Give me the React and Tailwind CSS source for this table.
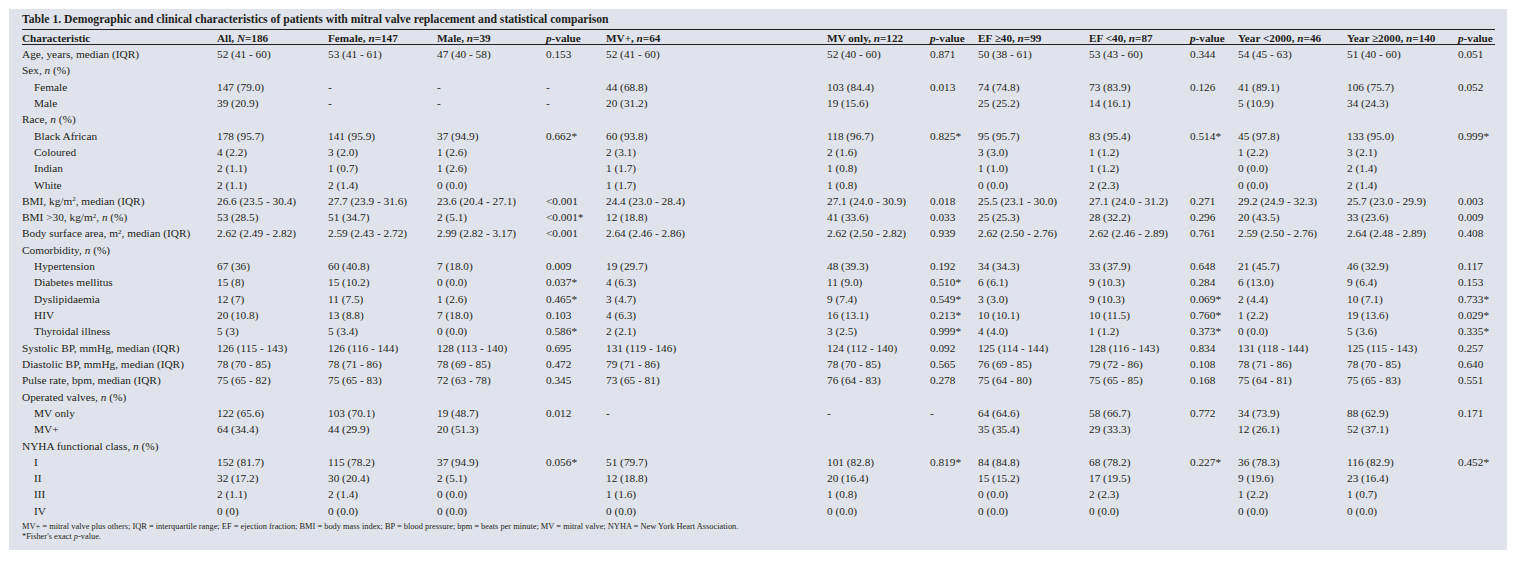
import React from "react";

const I = ({ children }) => <i>{children}</i>;

const head = [
  "Characteristic",
  <>All, <I>N</I>=186</>,
  <>Female, <I>n</I>=147</>,
  <>Male, <I>n</I>=39</>,
  <><I>p</I>-value</>,
  <>MV+, <I>n</I>=64</>,
  <>MV only, <I>n</I>=122</>,
  <><I>p</I>-value</>,
  <>EF ≥40, <I>n</I>=99</>,
  <>EF &lt;40, <I>n</I>=87</>,
  <><I>p</I>-value</>,
  <>Year &lt;2000, <I>n</I>=46</>,
  <>Year ≥2000, <I>n</I>=140</>,
  <><I>p</I>-value</>,
];

const nPct = (label) => <>{label}, <I>n</I> (%)</>;

const rows = [
  { l: "Age, years, median (IQR)", d: ["52 (41 - 60)", "53 (41 - 61)", "47 (40 - 58)", "0.153", "52 (41 - 60)", "52 (40 - 60)", "0.871", "50 (38 - 61)", "53 (43 - 60)", "0.344", "54 (45 - 63)", "51 (40 - 60)", "0.051"] },
  { l: nPct("Sex"), d: [] },
  { l: "Female", s: 1, d: ["147 (79.0)", "-", "-", "-", "44 (68.8)", "103 (84.4)", "0.013", "74 (74.8)", "73 (83.9)", "0.126", "41 (89.1)", "106 (75.7)", "0.052"] },
  { l: "Male", s: 1, d: ["39 (20.9)", "-", "-", "-", "20 (31.2)", "19 (15.6)", "", "25 (25.2)", "14 (16.1)", "", "5 (10.9)", "34 (24.3)", ""] },
  { l: nPct("Race"), d: [] },
  { l: "Black African", s: 1, d: ["178 (95.7)", "141 (95.9)", "37 (94.9)", "0.662*", "60 (93.8)", "118 (96.7)", "0.825*", "95 (95.7)", "83 (95.4)", "0.514*", "45 (97.8)", "133 (95.0)", "0.999*"] },
  { l: "Coloured", s: 1, d: ["4 (2.2)", "3 (2.0)", "1 (2.6)", "", "2 (3.1)", "2 (1.6)", "", "3 (3.0)", "1 (1.2)", "", "1 (2.2)", "3 (2.1)", ""] },
  { l: "Indian", s: 1, d: ["2 (1.1)", "1 (0.7)", "1 (2.6)", "", "1 (1.7)", "1 (0.8)", "", "1 (1.0)", "1 (1.2)", "", "0 (0.0)", "2 (1.4)", ""] },
  { l: "White", s: 1, d: ["2 (1.1)", "2 (1.4)", "0 (0.0)", "", "1 (1.7)", "1 (0.8)", "", "0 (0.0)", "2 (2.3)", "", "0 (0.0)", "2 (1.4)", ""] },
  { l: <>BMI, kg/m<sup className="text-[7px]">2</sup>, median (IQR)</>, d: ["26.6 (23.5 - 30.4)", "27.7 (23.9 - 31.6)", "23.6 (20.4 - 27.1)", "<0.001", "24.4 (23.0 - 28.4)", "27.1 (24.0 - 30.9)", "0.018", "25.5 (23.1 - 30.0)", "27.1 (24.0 - 31.2)", "0.271", "29.2 (24.9 - 32.3)", "25.7 (23.0 - 29.9)", "0.003"] },
  { l: <>BMI &gt;30, kg/m<sup className="text-[7px]">2</sup>, <I>n</I> (%)</>, d: ["53 (28.5)", "51 (34.7)", "2 (5.1)", "<0.001*", "12 (18.8)", "41 (33.6)", "0.033", "25 (25.3)", "28 (32.2)", "0.296", "20 (43.5)", "33 (23.6)", "0.009"] },
  { l: <>Body surface area, m<sup className="text-[7px]">2</sup>, median (IQR)</>, d: ["2.62 (2.49 - 2.82)", "2.59 (2.43 - 2.72)", "2.99 (2.82 - 3.17)", "<0.001", "2.64 (2.46 - 2.86)", "2.62 (2.50 - 2.82)", "0.939", "2.62 (2.50 - 2.76)", "2.62 (2.46 - 2.89)", "0.761", "2.59 (2.50 - 2.76)", "2.64 (2.48 - 2.89)", "0.408"] },
  { l: nPct("Comorbidity"), d: [] },
  { l: "Hypertension", s: 1, d: ["67 (36)", "60 (40.8)", "7 (18.0)", "0.009", "19 (29.7)", "48 (39.3)", "0.192", "34 (34.3)", "33 (37.9)", "0.648", "21 (45.7)", "46 (32.9)", "0.117"] },
  { l: "Diabetes mellitus", s: 1, d: ["15 (8)", "15 (10.2)", "0 (0.0)", "0.037*", "4 (6.3)", "11 (9.0)", "0.510*", "6 (6.1)", "9 (10.3)", "0.284", "6 (13.0)", "9 (6.4)", "0.153"] },
  { l: "Dyslipidaemia", s: 1, d: ["12 (7)", "11 (7.5)", "1 (2.6)", "0.465*", "3 (4.7)", "9 (7.4)", "0.549*", "3 (3.0)", "9 (10.3)", "0.069*", "2 (4.4)", "10 (7.1)", "0.733*"] },
  { l: "HIV", s: 1, d: ["20 (10.8)", "13 (8.8)", "7 (18.0)", "0.103", "4 (6.3)", "16 (13.1)", "0.213*", "10 (10.1)", "10 (11.5)", "0.760*", "1 (2.2)", "19 (13.6)", "0.029*"] },
  { l: "Thyroidal illness", s: 1, d: ["5 (3)", "5 (3.4)", "0 (0.0)", "0.586*", "2 (2.1)", "3 (2.5)", "0.999*", "4 (4.0)", "1 (1.2)", "0.373*", "0 (0.0)", "5 (3.6)", "0.335*"] },
  { l: "Systolic BP, mmHg, median (IQR)", d: ["126 (115 - 143)", "126 (116 - 144)", "128 (113 - 140)", "0.695", "131 (119 - 146)", "124 (112 - 140)", "0.092", "125 (114 - 144)", "128 (116 - 143)", "0.834", "131 (118 - 144)", "125 (115 - 143)", "0.257"] },
  { l: "Diastolic BP, mmHg, median (IQR)", d: ["78 (70 - 85)", "78 (71 - 86)", "78 (69 - 85)", "0.472", "79 (71 - 86)", "78 (70 - 85)", "0.565", "76 (69 - 85)", "79 (72 - 86)", "0.108", "78 (71 - 86)", "78 (70 - 85)", "0.640"] },
  { l: "Pulse rate, bpm, median (IQR)", d: ["75 (65 - 82)", "75 (65 - 83)", "72 (63 - 78)", "0.345", "73 (65 - 81)", "76 (64 - 83)", "0.278", "75 (64 - 80)", "75 (65 - 85)", "0.168", "75 (64 - 81)", "75 (65 - 83)", "0.551"] },
  { l: nPct("Operated valves"), d: [] },
  { l: "MV only", s: 1, d: ["122 (65.6)", "103 (70.1)", "19 (48.7)", "0.012", "-", "-", "-", "64 (64.6)", "58 (66.7)", "0.772", "34 (73.9)", "88 (62.9)", "0.171"] },
  { l: "MV+", s: 1, d: ["64 (34.4)", "44 (29.9)", "20 (51.3)", "", "", "", "", "35 (35.4)", "29 (33.3)", "", "12 (26.1)", "52 (37.1)", ""] },
  { l: nPct("NYHA functional class"), d: [] },
  { l: "I", s: 1, d: ["152 (81.7)", "115 (78.2)", "37 (94.9)", "0.056*", "51 (79.7)", "101 (82.8)", "0.819*", "84 (84.8)", "68 (78.2)", "0.227*", "36 (78.3)", "116 (82.9)", "0.452*"] },
  { l: "II", s: 1, d: ["32 (17.2)", "30 (20.4)", "2 (5.1)", "", "12 (18.8)", "20 (16.4)", "", "15 (15.2)", "17 (19.5)", "", "9 (19.6)", "23 (16.4)", ""] },
  { l: "III", s: 1, d: ["2 (1.1)", "2 (1.4)", "0 (0.0)", "", "1 (1.6)", "1 (0.8)", "", "0 (0.0)", "2 (2.3)", "", "1 (2.2)", "1 (0.7)", ""] },
  { l: "IV", s: 1, d: ["0 (0)", "0 (0.0)", "0 (0.0)", "", "0 (0.0)", "0 (0.0)", "", "0 (0.0)", "0 (0.0)", "", "0 (0.0)", "0 (0.0)", ""] },
];

const grid =
  "grid grid-cols-[195px_111px_109px_109px_60px_221px_103px_48px_111px_101px_48px_109px_111px_35px]";

export default function App() {
  return (
    <div
      className="w-[1513px] h-[561px] bg-white pt-[9px] pl-[9px]"
      style={{ fontFamily: '"Liberation Serif", "Times New Roman", serif' }}
    >
      <div className="w-[1498px] h-[541px] bg-[#e1e3ec] pl-[13px] pt-[4px] text-[#231f20]">
        <div className="w-[1473px]">
          <div className="text-[11.7px] leading-[14px] font-bold whitespace-nowrap">
            Table 1. Demographic and clinical characteristics of patients with mitral valve replacement and statistical comparison
          </div>
          <div className="mt-[2px] border-t border-[#231f20]" />
          <div className={`${grid} h-[15px] items-center text-[11.2px] font-bold border-b border-[#231f20]`}>
            {head.map((h, i) => (
              <div key={i} className="whitespace-nowrap">{h}</div>
            ))}
          </div>
          <div className="text-[11.3px] mt-[1px]">
            {rows.map((r, ri) => (
              <div key={ri} className={`${grid} h-[16.32px] items-center`}>
                <div className={`whitespace-nowrap ${r.s ? "pl-[12px]" : ""}`}>{r.l}</div>
                {r.d.map((c, ci) => (
                  <div key={ci} className="whitespace-nowrap">{c}</div>
                ))}
              </div>
            ))}
          </div>
          <div className="mt-[3px] text-[8.4px] leading-[10px]">
            <div className="whitespace-nowrap">
              MV+ = mitral valve plus others; IQR = interquartile range; EF = ejection fraction; BMI = body mass index; BP = blood pressure; bpm = beats per minute; MV = mitral valve; NYHA = New York Heart Association.
            </div>
            <div>
              *Fisher's exact <I>p</I>-value.
            </div>
          </div>
        </div>
      </div>
    </div>
  );
}
